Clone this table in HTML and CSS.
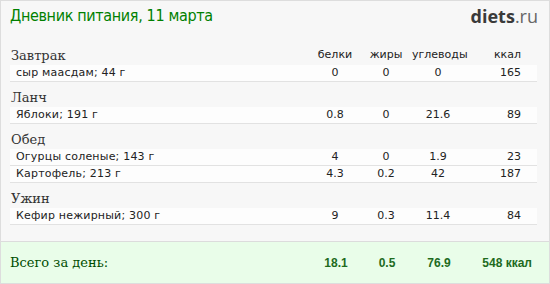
FILE: index.html
```html
<!DOCTYPE html>
<html lang="ru">
<head>
<meta charset="utf-8">
<link rel="stylesheet" href="styles.css">
</head>
<body>
<div class="card">
  <div class="top">
    <div class="title">Дневник питания, 11 марта</div>
    <div class="logo"><b>diets</b>.ru</div>
  </div>
  <div class="diary">
    <div class="row sec">
      <div class="sec-name">Завтрак</div>
      <div class="lbl">белки</div><div class="lbl">жиры</div><div class="lbl">углеводы</div><div class="lbl kc">ккал</div>
    </div>
    <div class="row item"><div class="nm">сыр маасдам; 44 г</div><div>0</div><div>0</div><div>0</div><div class="kc">165</div></div>
    <div class="row sec"><div class="sec-name">Ланч</div></div>
    <div class="row item"><div class="nm">Яблоки; 191 г</div><div>0.8</div><div>0</div><div>21.6</div><div class="kc">89</div></div>
    <div class="row sec"><div class="sec-name">Обед</div></div>
    <div class="row item"><div class="nm">Огурцы соленые; 143 г</div><div>4</div><div>0</div><div>1.9</div><div class="kc">23</div></div>
    <div class="row item"><div class="nm">Картофель; 213 г</div><div>4.3</div><div>0.2</div><div>42</div><div class="kc">187</div></div>
    <div class="row sec"><div class="sec-name">Ужин</div></div>
    <div class="row item"><div class="nm">Кефир нежирный; 300 г</div><div>9</div><div>0.3</div><div>11.4</div><div class="kc">84</div></div>
  </div>
  <div class="total">
    <div class="total-label">Всего за день:</div>
    <div class="tv">18.1</div>
    <div class="tv">0.5</div>
    <div class="tv">76.9</div>
    <div class="tv tk">548 ккал</div>
  </div>
</div>
</body>
</html>
```

FILE: styles.css
```css
html, body {
  margin: 0;
  padding: 0;
  background: #ffffff;
}
.card {
  box-sizing: border-box;
  width: 550px;
  height: 284px;
  border: 1px solid #dddddd;
  background: #f7f7f7;
  display: flex;
  flex-direction: column;
}
.top {
  display: flex;
  justify-content: space-between;
  align-items: flex-start;
  height: 39px;
  flex: none;
  padding: 0 11px 0 9px;
}
.title {
  font-family: "DejaVu Sans Condensed", "Liberation Sans", Arial, sans-serif;
  font-stretch: condensed;
  font-size: 16px;
  letter-spacing: -0.35px;
  color: #008000;
  padding-top: 5px;
}
.logo {
  font-family: "Open Sans", "DejaVu Sans", sans-serif;
  font-size: 18px;
  color: #666666;
  padding-top: 3px;
}
.logo b {
  color: #3a3a3a;
  font-weight: 700;
}
.diary {
  margin-left: 9px;
  width: 527px;
  flex: none;
}
.row {
  display: grid;
  grid-template-columns: 300px 50px 52px 52px 73px;
  font-family: "DejaVu Sans", Verdana, sans-serif;
  font-size: 11px;
  color: #222222;
  white-space: nowrap;
}
.row > div {
  text-align: center;
}
.row > .kc {
  text-align: right;
  padding-right: 16px;
}
.sec {
  height: 25px;
  align-items: end;
}
.sec .lbl {
  line-height: 13px;
  padding-bottom: 4px;
}
.sec .sec-name {
  text-align: left;
  font-family: "DejaVu Serif", Georgia, serif;
  font-size: 13px;
  line-height: 15px;
  color: #333333;
  padding-left: 1px;
  padding-bottom: 2px;
}
.item {
  height: 16px;
  line-height: 16px;
  background: #fdfdfd;
  border-bottom: 1px solid #e2e2e2;
}
.item .nm {
  text-align: left;
  padding-left: 6px;
  letter-spacing: 0.2px;
}
.total {
  margin-top: auto;
  height: 41px;
  flex: none;
  border-top: 1px solid #dcdcdc;
  background: #e9fde9;
  display: grid;
  grid-template-columns: 301px 50px 52px 52px 67px;
  align-items: center;
  padding-left: 9px;
}
.total-label {
  font-family: "DejaVu Serif", Georgia, serif;
  font-size: 13px;
  color: #004d00;
}
.tv {
  font-family: "Liberation Sans", Arial, sans-serif;
  font-weight: bold;
  font-size: 12px;
  color: #1e6b1e;
  text-align: center;
}
.tv.tk {
  text-align: right;
}
```
